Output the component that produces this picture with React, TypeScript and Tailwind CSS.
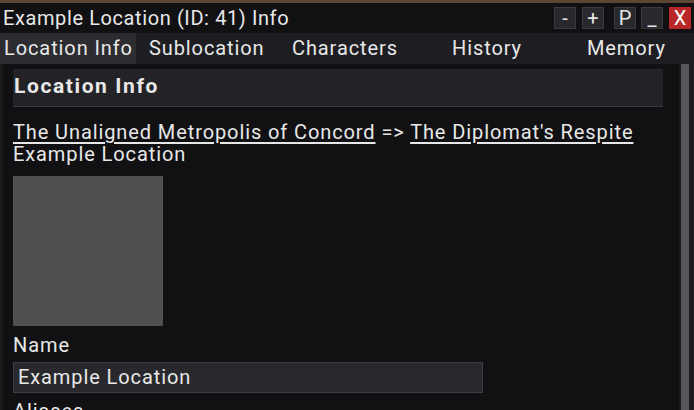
const tabs = [
  { label: "Location Info", active: true, w: "w-[136px] pl-[4px]" },
  { label: "Sublocation", active: false, w: "w-[143px] pl-[13px]" },
  { label: "Characters", active: false, w: "w-[160px] pl-[13px]" },
  { label: "History", active: false, w: "w-[135px] pl-[13px]" },
  { label: "Memory", active: false, w: "flex-1 pl-[13px]" },
];

const WinButton = ({ label, danger }: { label: string; danger?: boolean }) => (
  <div
    className={
      "flex h-[22px] w-[22px] items-center justify-center border text-[20px] leading-none " +
      (danger ? "border-[#b8282a] bg-[#b8282a] text-white" : "border-[#3a3a3e] bg-[#29292d] text-[#e6e6e6]")
    }
  >
    {label}
  </div>
);

export default function App() {
  return (
    <div
      className="flex h-[410px] w-[694px] flex-col overflow-hidden bg-[#1e1e22] text-[#e8e8e8] tracking-[0.9px]"
      style={{ fontFamily: "Roboto, 'Noto Sans', sans-serif" }}
    >
      <div className="h-[3px] bg-[#5a4632]" />
      <div className="flex h-[30px] items-center bg-[#111114] pl-[3px] pr-[3px]">
        <span className="text-[20px] leading-none tracking-[0.6px]">Example Location (ID: 41) Info</span>
        <div className="ml-auto flex items-center tracking-normal">
          <WinButton label="-" />
          <div className="w-[6px]" />
          <WinButton label="+" />
          <div className="w-[10px]" />
          <WinButton label="P" />
          <div className="w-[5px]" />
          <WinButton label="_" />
          <div className="w-[6px]" />
          <WinButton label="X" danger />
        </div>
      </div>
      <div className="flex h-[31px] bg-[#1e1e22]">
        {tabs.map((t) => (
          <div
            key={t.label}
            className={
              "flex items-center pb-[1px] text-[20px] leading-none " +
              t.w +
              (t.active ? " bg-[#2c2c31]" : "")
            }
          >
            {t.label}
          </div>
        ))}
      </div>
      <div className="flex min-h-0 flex-1">
        <div className="w-[3px] bg-[#1a1a1d]" />
        <div className="min-w-0 flex-1 bg-[#111114] pl-[10px] pr-[16px] pt-[5px]">
          <div className="flex h-[38px] items-center border-b border-[#3a3a3f] bg-[#232327] pb-[3px] pl-[1px]">
            <span className="text-[21px] font-bold leading-none tracking-[1.6px]">Location Info</span>
          </div>
          <div className="mt-[14px] text-[20px] leading-[22px]">
            <div>
              <span className="underline underline-offset-[3px]">The Unaligned Metropolis of Concord</span>
              <span> =&gt; </span>
              <span className="underline underline-offset-[3px]">The Diplomat's Respite</span>
            </div>
            <div>Example Location</div>
          </div>
          <div className="mt-[11px] h-[150px] w-[150px] bg-[#505050]" />
          <div className="mt-[7px] text-[20px] leading-[24px]">Name</div>
          <div className="mt-[5px] flex h-[31px] w-[470px] items-center border border-[#3d3d42] bg-[#29292d] pb-[2px] pl-[4px] text-[20px] leading-none">
            Example Location
          </div>
          <div className="mt-[6px] text-[20px] leading-[24px]">Aliases</div>
        </div>
        <div className="flex w-[12px] justify-center bg-[#1c1c1f]">
          <div className="h-full w-[8px] bg-[#55555a]" />
        </div>
        <div className="w-[3px] bg-[#1e1e22]" />
      </div>
    </div>
  );
}
